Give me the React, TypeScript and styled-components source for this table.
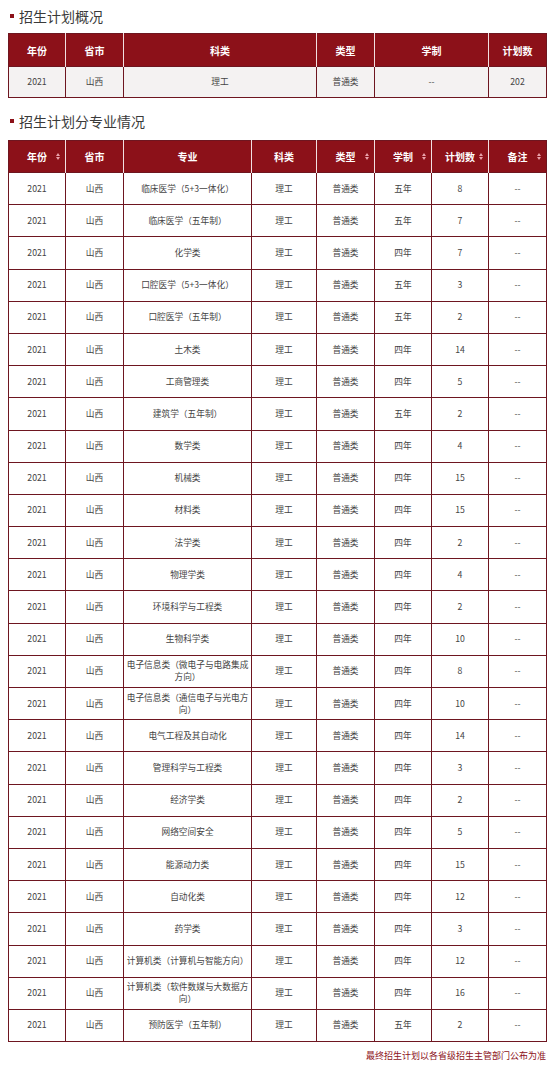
import React from 'react';
import styled, { createGlobalStyle } from 'styled-components';

type Row = {
  major: string;
  years: string;
  count: number;
};

type Column = {
  label: string;
  width: number;
  sort?: boolean;
};

const rows: Row[] = [
  { major: '临床医学（5+3一体化）', years: '五年', count: 8 },
  { major: '临床医学（五年制）', years: '五年', count: 7 },
  { major: '化学类', years: '四年', count: 7 },
  { major: '口腔医学（5+3一体化）', years: '五年', count: 3 },
  { major: '口腔医学（五年制）', years: '五年', count: 2 },
  { major: '土木类', years: '四年', count: 14 },
  { major: '工商管理类', years: '四年', count: 5 },
  { major: '建筑学（五年制）', years: '五年', count: 2 },
  { major: '数学类', years: '四年', count: 4 },
  { major: '机械类', years: '四年', count: 15 },
  { major: '材料类', years: '四年', count: 15 },
  { major: '法学类', years: '四年', count: 2 },
  { major: '物理学类', years: '四年', count: 4 },
  { major: '环境科学与工程类', years: '四年', count: 2 },
  { major: '生物科学类', years: '四年', count: 10 },
  { major: '电子信息类（微电子与电路集成方向）', years: '四年', count: 8 },
  { major: '电子信息类（通信电子与光电方向）', years: '四年', count: 10 },
  { major: '电气工程及其自动化', years: '四年', count: 14 },
  { major: '管理科学与工程类', years: '四年', count: 3 },
  { major: '经济学类', years: '四年', count: 2 },
  { major: '网络空间安全', years: '四年', count: 5 },
  { major: '能源动力类', years: '四年', count: 15 },
  { major: '自动化类', years: '四年', count: 12 },
  { major: '药学类', years: '四年', count: 3 },
  { major: '计算机类（计算机与智能方向）', years: '四年', count: 12 },
  { major: '计算机类（软件数媒与大数据方向）', years: '四年', count: 16 },
  { major: '预防医学（五年制）', years: '五年', count: 2 },
];

const summaryCols: Column[] = [
  { label: '年份', width: 57 },
  { label: '省市', width: 58 },
  { label: '科类', width: 193 },
  { label: '类型', width: 58 },
  { label: '学制', width: 114 },
  { label: '计划数', width: 58 },
];

const detailCols: Column[] = [
  { label: '年份', width: 57, sort: true },
  { label: '省市', width: 58 },
  { label: '专业', width: 128 },
  { label: '科类', width: 65 },
  { label: '类型', width: 58, sort: true },
  { label: '学制', width: 57, sort: true },
  { label: '计划数', width: 57, sort: true },
  { label: '备注', width: 58, sort: true },
];

const GlobalStyle = createGlobalStyle`
  body {
    margin: 0;
    background: #ffffff;
    font-family: "Noto Sans CJK SC", "Liberation Sans", sans-serif;
  }
`;

const Page = styled.div`
  width: 559px;
  padding: 0 13px 0 8px;
  box-sizing: border-box;
`;

const Title = styled.h2<{ $top: number; $bottom: number }>`
  display: flex;
  align-items: center;
  gap: 5px;
  margin: ${(p) => p.$top}px 0 ${(p) => p.$bottom}px 2px;
  height: 20px;
  font-size: 14px;
  font-weight: normal;
  color: #3a3a3a;

  &::before {
    content: '';
    width: 4px;
    height: 4px;
    background: #8c1119;
  }
`;

const Table = styled.table`
  width: 538px;
  table-layout: fixed;
  border-collapse: collapse;
  border: 1px solid #6e1620;
`;

const Col = styled.col<{ $w: number }>`
  width: ${(p) => p.$w}px;
`;

const Th = styled.th`
  position: relative;
  background: #8c1119;
  color: #ffffff;
  font-size: 10px;
  font-weight: bold;
  text-align: center;
  padding: 0;
  border-left: 1px solid #f1dfe1;
  &:first-child {
    border-left: none;
  }
`;

const HeadRow = styled.tr<{ $h: number }>`
  height: ${(p) => p.$h}px;
`;

const BodyRow = styled.tr<{ $h: number; $bg: string }>`
  height: ${(p) => p.$h}px;
  background: ${(p) => p.$bg};
`;

const Td = styled.td`
  border: 1px solid #6e1620;
  font-size: 8.7px;
  line-height: 12px;
  color: #444444;
  text-align: center;
  padding: 0 2px;
  word-break: break-all;
`;

const SortIcon = styled.span`
  position: absolute;
  right: 5px;
  top: 50%;
  margin-top: -4px;
  display: flex;
  flex-direction: column;
  gap: 1px;

  &::before,
  &::after {
    content: '';
    width: 0;
    height: 0;
    border-left: 2.5px solid transparent;
    border-right: 2.5px solid transparent;
  }
  &::before {
    border-bottom: 3px solid #e9a2aa;
  }
  &::after {
    border-top: 3px solid #e9a2aa;
  }
`;

const Note = styled.p`
  margin: 7px 0 0;
  width: 538px;
  text-align: right;
  font-size: 9px;
  color: #8c1119;
`;

const Header = ({ cols, height }: { cols: Column[]; height: number }) => (
  <>
    <colgroup>
      {cols.map((c) => (
        <Col key={c.label} $w={c.width} />
      ))}
    </colgroup>
    <thead>
      <HeadRow $h={height}>
        {cols.map((c) => (
          <Th key={c.label}>
            {c.label}
            {c.sort && <SortIcon />}
          </Th>
        ))}
      </HeadRow>
    </thead>
  </>
);

const App = () => {
  return (
    <Page>
      <GlobalStyle />
      <Title $top={6} $bottom={7}>招生计划概况</Title>
      <Table>
        <Header cols={summaryCols} height={33} />
        <tbody>
          <BodyRow $h={31} $bg='#f4f2f2'>
            <Td>2021</Td>
            <Td>山西</Td>
            <Td>理工</Td>
            <Td>普通类</Td>
            <Td>--</Td>
            <Td>202</Td>
          </BodyRow>
        </tbody>
      </Table>

      <Title $top={13} $bottom={9}>招生计划分专业情况</Title>
      <Table>
        <Header cols={detailCols} height={32} />
        <tbody>
          {rows.map((r, i) => (
            <BodyRow key={i} $h={32.2} $bg='#ffffff'>
              <Td>2021</Td>
              <Td>山西</Td>
              <Td>{r.major}</Td>
              <Td>理工</Td>
              <Td>普通类</Td>
              <Td>{r.years}</Td>
              <Td>{r.count}</Td>
              <Td>--</Td>
            </BodyRow>
          ))}
        </tbody>
      </Table>
      <Note>最终招生计划以各省级招生主管部门公布为准</Note>
    </Page>
  );
};

export default App;
